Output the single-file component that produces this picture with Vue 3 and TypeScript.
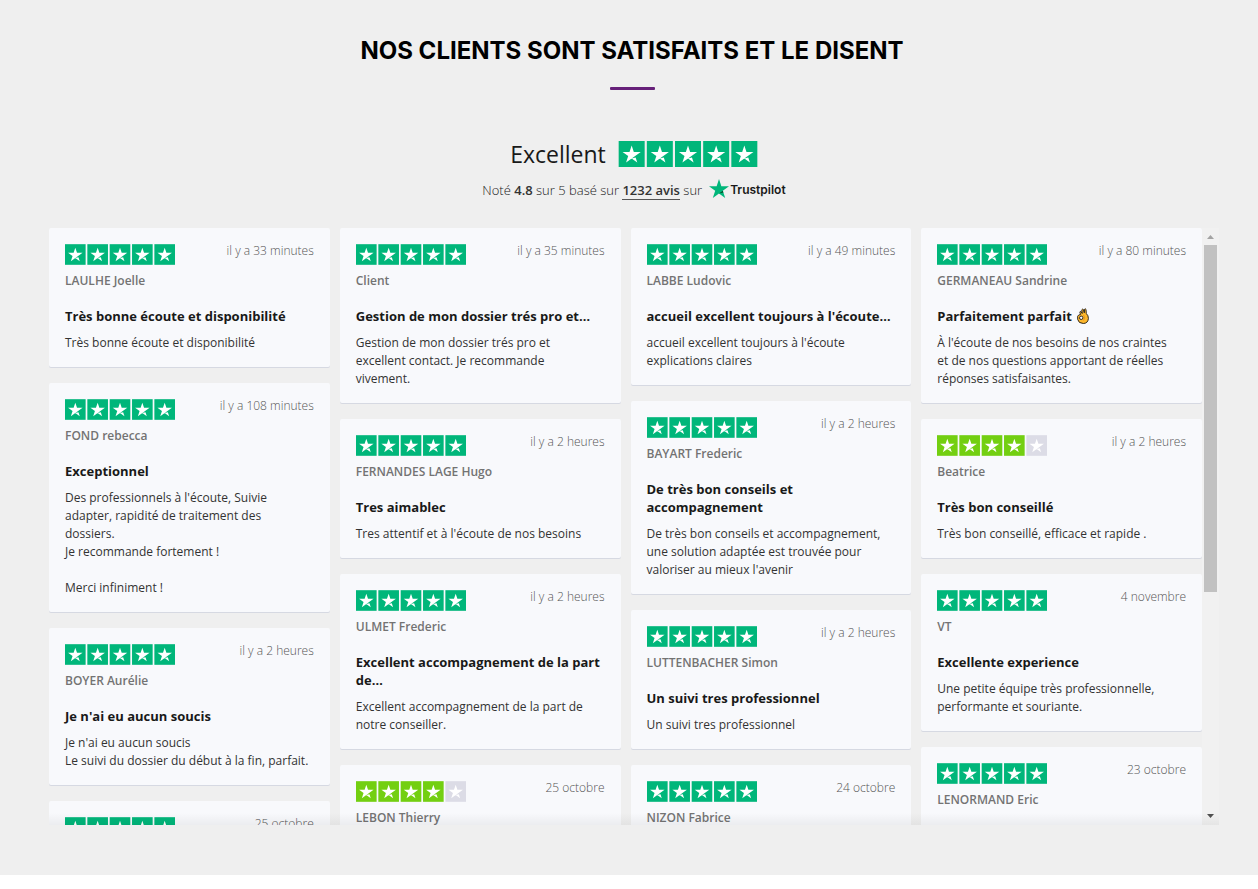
<script setup lang="ts">
interface Review {
  name: string
  time: string
  rating: number
  title: string
  text: string
  emoji?: boolean
}

const starPath =
  'M48 64.7L62.6 61l6.1 18.8zm33.6-24.3H55.9L48 16.2l-7.9 24.2H14.4l20.8 15-7.9 24.2 20.8-15 12.8-9.2 20.7-15z'

const columns: Review[][] = [
  [
    { name: 'LAULHE Joelle', time: 'il y a 33 minutes', rating: 5, title: 'Très bonne écoute et disponibilité', text: 'Très bonne écoute et disponibilité' },
    { name: 'FOND rebecca', time: 'il y a 108 minutes', rating: 5, title: 'Exceptionnel', text: "Des professionnels à l'écoute, Suivie\nadapter, rapidité de traitement des\ndossiers.\nJe recommande fortement !\n\nMerci infiniment !" },
    { name: 'BOYER Aurélie', time: 'il y a 2 heures', rating: 5, title: "Je n'ai eu aucun soucis", text: "Je n'ai eu aucun soucis\nLe suivi du dossier du début à la fin, parfait." },
    { name: '', time: '25 octobre', rating: 5, title: '', text: '' },
  ],
  [
    { name: 'Client', time: 'il y a 35 minutes', rating: 5, title: 'Gestion de mon dossier trés pro et…', text: 'Gestion de mon dossier trés pro et\nexcellent contact. Je recommande\nvivement.' },
    { name: 'FERNANDES LAGE Hugo', time: 'il y a 2 heures', rating: 5, title: 'Tres aimablec', text: "Tres attentif et à l'écoute de nos besoins" },
    { name: 'ULMET Frederic', time: 'il y a 2 heures', rating: 5, title: 'Excellent accompagnement de la part\nde…', text: 'Excellent accompagnement de la part de\nnotre conseiller.' },
    { name: 'LEBON Thierry', time: '25 octobre', rating: 4, title: '', text: '' },
  ],
  [
    { name: 'LABBE Ludovic', time: 'il y a 49 minutes', rating: 5, title: "accueil excellent toujours à l'écoute…", text: "accueil excellent toujours à l'écoute\nexplications claires" },
    { name: 'BAYART Frederic', time: 'il y a 2 heures', rating: 5, title: 'De très bon conseils et\naccompagnement', text: "De très bon conseils et accompagnement,\nune solution adaptée est trouvée pour\nvaloriser au mieux l'avenir" },
    { name: 'LUTTENBACHER Simon', time: 'il y a 2 heures', rating: 5, title: 'Un suivi tres professionnel', text: 'Un suivi tres professionnel' },
    { name: 'NIZON Fabrice', time: '24 octobre', rating: 5, title: '', text: '' },
  ],
  [
    { name: 'GERMANEAU Sandrine', time: 'il y a 80 minutes', rating: 5, title: 'Parfaitement parfait', emoji: true, text: "À l'écoute de nos besoins de nos craintes\net de nos questions apportant de réelles\nréponses satisfaisantes." },
    { name: 'Beatrice', time: 'il y a 2 heures', rating: 4, title: 'Très bon conseillé', text: 'Très bon conseillé, efficace et rapide .' },
    { name: 'VT', time: '4 novembre', rating: 5, title: 'Excellente experience', text: 'Une petite équipe très professionnelle,\nperformante et souriante.' },
    { name: 'LENORMAND Eric', time: '23 octobre', rating: 5, title: '', text: '' },
  ],
]

function starColor(rating: number, n: number): string {
  if (n > rating) return '#dcdce6'
  return rating === 5 ? '#00b67a' : '#73cf11'
}
</script>

<template>
  <section class="testimonials">
    <header class="heading">
      <h2>NOS CLIENTS SONT SATISFAITS ET LE DISENT</h2>
      <span class="rule"></span>
    </header>

    <div class="summary">
      <div class="score">
        <strong>Excellent</strong>
        <svg class="score-stars" viewBox="0 0 512 96" role="img" aria-label="4.8 sur 5">
          <g v-for="n in 5" :key="n" :transform="`translate(${(n - 1) * 104} 0)`">
            <rect width="96" height="96" fill="#00b67a" />
            <path :d="starPath" fill="#fff" />
          </g>
        </svg>
      </div>
      <p class="based">
        <span>Noté <b>4.8</b> sur 5 basé sur <a href="#avis">1232 avis</a> sur</span>
        <span class="brand">
          <svg viewBox="0 0 20 19" aria-hidden="true">
            <path d="M10 0l2.36 7.26H20l-6.18 4.48L16.18 19 10 14.51 3.82 19l2.36-7.26L0 7.26h7.64z" fill="#00b67a" />
            <path d="M14.35 13.38l-.53-1.64L10 14.51z" fill="#005128" />
          </svg>
          <span>Trustpilot</span>
        </span>
      </p>
    </div>

    <div id="avis" class="reviews">
      <div class="columns">
        <div v-for="(column, c) in columns" :key="c" class="column">
          <article v-for="(review, i) in column" :key="i" class="card">
            <div class="top">
              <svg class="stars" viewBox="0 0 512 96" role="img" :aria-label="`${review.rating} sur 5`">
                <g v-for="n in 5" :key="n" :transform="`translate(${(n - 1) * 104} 0)`">
                  <rect width="96" height="96" :fill="starColor(review.rating, n)" />
                  <path :d="starPath" fill="#fff" />
                </g>
              </svg>
              <time>{{ review.time }}</time>
            </div>
            <div class="name">{{ review.name }}</div>
            <h3>
              <span>{{ review.title }}</span>
              <svg v-if="review.emoji" class="emoji" viewBox="0 0 12 16" role="img" aria-label="OK">
                <path d="M3.500 6.500L2.800 4Q3.300 2.800 4.300 3.800L5.200 5.500 4.800 1.800Q5.400.600 6.400 1.500L7.300 4.800 7.500 1.300Q8.400.300 9 1.400L9.300 5.500Q11.500 7.500 11.400 10.500 11 15.400 6.300 15.500 1.500 15.400.700 11.500L.600 8.300Q1.500 6.500 3.500 6.500z" fill="#fdb72b" stroke="#1c1915" stroke-width="0.900" />
                <circle cx="4.200" cy="9.800" r="1.700" fill="#f8f9fc" stroke="#1c1915" stroke-width="0.900" />
                <path d="M6.500 7Q8.800 9.500 6.500 12.500" fill="none" stroke="#d98e1c" stroke-width="0.800" />
              </svg>
            </h3>
            <p>{{ review.text }}</p>
          </article>
        </div>
      </div>
      <div class="scrollbar" aria-hidden="true">
        <svg viewBox="0 0 17 17"><path d="M5 11l3.500-4 3.500 4z" fill="#a3a3a3" /></svg>
        <span class="thumb"></span>
        <svg viewBox="0 0 17 17"><path d="M5 6h7l-3.500 4z" fill="#505050" /></svg>
      </div>
    </div>
  </section>
</template>

<style>
body {
  margin: 0;
  background: #fff;
}
</style>

<style scoped>
.testimonials {
  box-sizing: border-box;
  padding: 31px 39px 50px;
  background: #efefef;
  color: #191919;
  font-family: "Open Sans", "Noto Sans", sans-serif;
  font-size: 12px;
  line-height: 18px;
}
.heading {
  display: flex;
  flex-direction: column;
  align-items: center;
  padding-left: 6px;
}
h2 {
  margin: 0;
  color: #000;
  font-family: Inter, sans-serif;
  font-size: 24px;
  font-weight: 700;
  line-height: 40px;
}
.rule {
  width: 45px;
  height: 3px;
  margin-top: 16px;
  border-radius: 1px;
  background: #662079;
}
.summary {
  display: flex;
  flex-direction: column;
  align-items: center;
  height: 138px;
  padding-left: 10px;
}
.score {
  display: flex;
  align-items: center;
  gap: 12px;
  margin-top: 48px;
  height: 32px;
}
.score strong {
  font-size: 23px;
  font-weight: 500;
  line-height: 32px;
}
.score-stars {
  display: block;
  width: 140px;
  height: 26px;
}
.based {
  display: flex;
  align-items: center;
  gap: 7px;
  margin: 9px 0 0;
  font-size: 13px;
  font-weight: 300;
  line-height: 20px;
}
.based b,
.based a {
  color: #333;
  font-weight: 600;
}
.based a {
  text-decoration: none;
  border-bottom: 1px solid #555;
}
.brand {
  display: flex;
  gap: 1px;
  color: #191919;
  font-family: Inter, sans-serif;
  font-size: 12px;
  font-weight: 600;
  line-height: 22px;
}
.brand svg {
  width: 20px;
  height: 19px;
}
.reviews {
  position: relative;
  display: flex;
  height: 597px;
  padding-left: 10px;
  overflow: hidden;
}
.reviews::after {
  content: "";
  position: absolute;
  right: 0;
  bottom: 0;
  left: 10px;
  height: 12px;
  background: linear-gradient(rgba(0, 0, 0, 0), rgba(0, 0, 0, 0.05));
}
.columns {
  display: grid;
  flex: 1;
  grid-template-columns: repeat(4, minmax(0, 1fr));
  align-items: start;
  gap: 10px;
}
.column {
  display: flex;
  flex-direction: column;
  gap: 16px;
}
.card {
  padding: 16px 16px 15px;
  border-radius: 2px;
  background: #f8f9fc;
  box-shadow: 0 1px 0 #d6d9e2;
}
.top {
  display: flex;
  justify-content: space-between;
  height: 20px;
}
.stars {
  display: block;
  width: 110px;
  height: 21px;
}
time {
  margin-top: -2px;
  color: #555;
  font-weight: 300;
}
.name {
  min-height: 18px;
  margin-top: 8px;
  color: #737373;
  font-weight: 600;
}
h3 {
  display: flex;
  align-items: center;
  gap: 5px;
  min-height: 18px;
  margin: 17px 0 0;
  font-size: 13px;
  font-weight: 700;
  line-height: 18px;
  white-space: pre;
}
.emoji {
  width: 12px;
  height: 16px;
}
.card p {
  min-height: 18px;
  margin: 9px 0 0;
  color: #333;
  white-space: pre;
}
.scrollbar {
  display: flex;
  flex-direction: column;
  width: 17px;
  background: #f1f1f1;
}
.scrollbar svg {
  flex: none;
  width: 17px;
  height: 17px;
}
.thumb {
  height: 347px;
  margin: 0 2px auto;
  background: #c1c1c1;
}
</style>
